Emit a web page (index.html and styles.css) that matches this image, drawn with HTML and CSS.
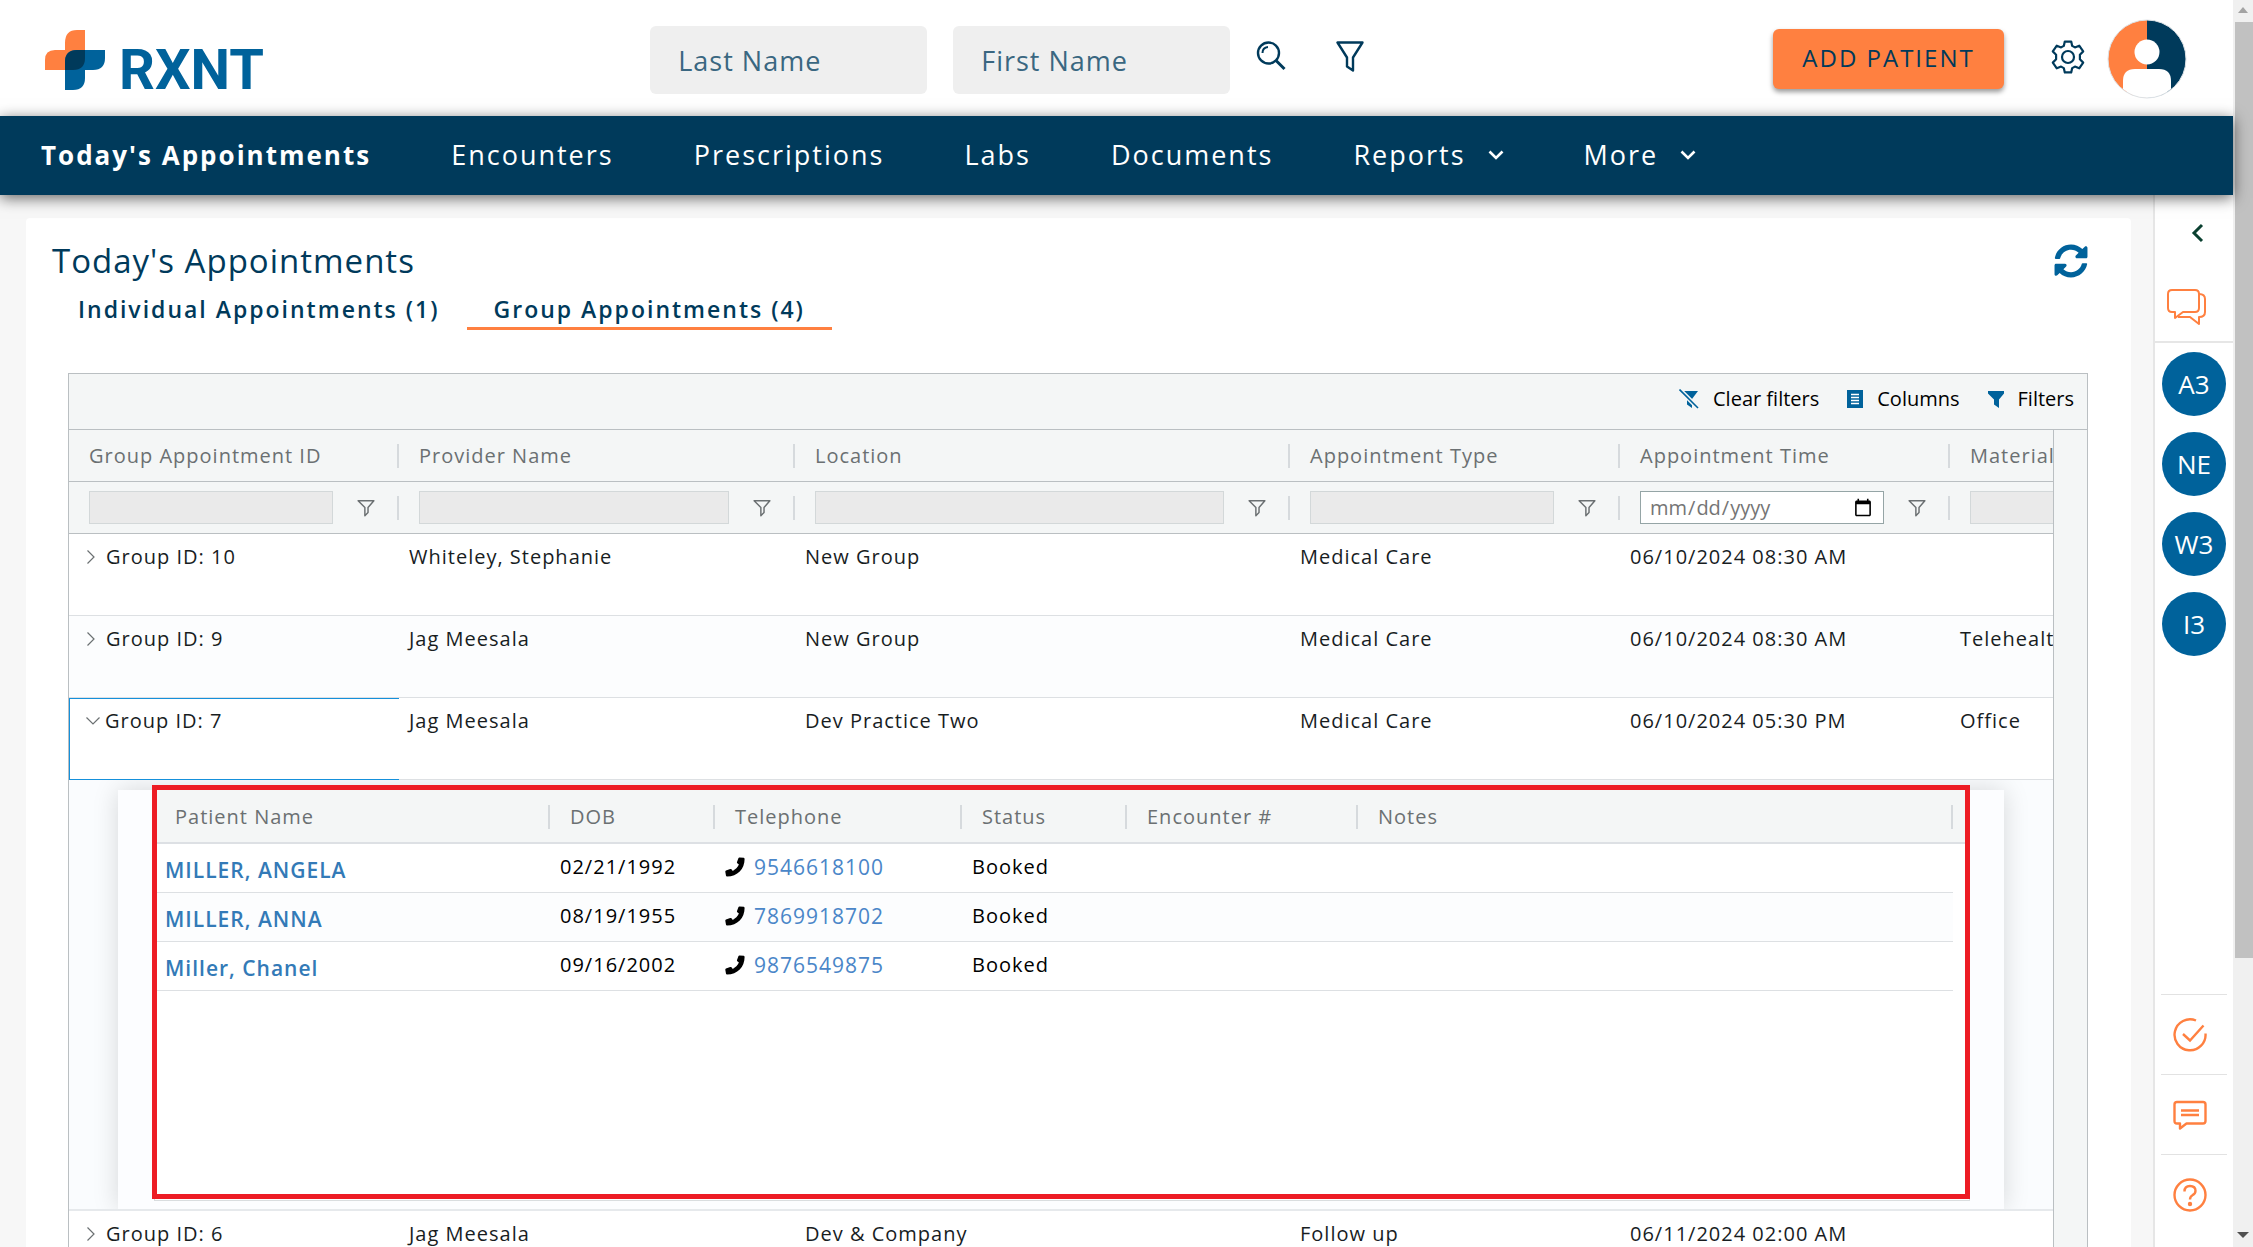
FILE: index.html
```html
<!DOCTYPE html>
<html lang="en">
<head>
<meta charset="utf-8">
<meta name="viewport" content="width=device-width, initial-scale=1">
<title>Today's Appointments</title>
<link rel="stylesheet" href="styles.css">
</head>
<body>
<svg class="sprite" aria-hidden="true">
  <symbol id="funnel" viewBox="0 0 16 16"><path d="M1 1.500h14l-5.200 6v4.500L7 14.800V7.500z" fill="none" stroke="currentColor" stroke-width="1.300" stroke-linejoin="round"/></symbol>
  <symbol id="chev-right" viewBox="0 0 10 16"><path d="M1.500 1.500 8 8l-6.500 6.500" fill="none" stroke="currentColor" stroke-width="1.200"/></symbol>
  <symbol id="chev-down" viewBox="0 0 16 10"><path d="M1.500 1.500 8 8l6.500-6.500" fill="none" stroke="currentColor" stroke-width="1.200"/></symbol>
  <symbol id="caret" viewBox="0 0 16 10"><path d="M1.500 1.500 8 8l6.500-6.500" fill="none" stroke="currentColor" stroke-width="2.600"/></symbol>
  <symbol id="phone" viewBox="0 0 20 20"><path d="M14.500 0.500 18.800 0.800Q19.600 1 19.600 2C19.600 12 12.500 19.500 2 19.500Q1.200 19.500 1 18.700L.3 14.700Q.2 13.900 1 13.500L5.200 12Q6 11.700 6.500 12.300L7.800 13.900C10.500 12.500 12.600 10.400 13.900 7.600L12.300 6.200Q11.700 5.700 12 5L13.500 1.100Q13.800.4 14.500.5z" fill="currentColor"/></symbol>
</svg>
<div class="shell">
  <div class="app">
    <header class="top">
      <a class="logo" href="#" aria-label="RXNT home">
        <svg class="logo-mark" viewBox="0 0 60 60" aria-hidden="true">
          <path d="M40 0v40H0V30Q0 20 10 20h10V13Q20 0 32 0z" fill="#ff8040"/>
          <path d="M32 20h28v8q0 12-12 12h-8v8q0 12-12 12h-8V32q0-12 12-12z" fill="#00629b"/>
          <path d="M32 20h8v8q0 12-12 12h-8v-8q0-12 12-12z" fill="#003a5b"/>
        </svg>
        <span>RXNT</span>
      </a>
      <form class="search">
        <input type="text" placeholder="Last Name" aria-label="Last Name">
        <input type="text" placeholder="First Name" aria-label="First Name">
        <button type="button" class="icon-btn" aria-label="Search">
          <svg width="30" height="30" viewBox="0 0 30 30" fill="none" stroke="currentColor"><circle cx="12.500" cy="12" r="10.500" stroke-width="2.400"/><path d="M20 19.500 28.500 28" stroke-width="3"/><path d="M6.500 12q0-5.500 5.500-6" stroke-width="2"/></svg>
        </button>
        <button type="button" class="icon-btn" aria-label="Filter">
          <svg width="28" height="32" viewBox="0 0 28 32" fill="none" stroke="currentColor" stroke-width="2.400"><path d="M1.500 2.500h25L17 17.500V30.500l-6-4v-9z" stroke-linejoin="round"/></svg>
        </button>
      </form>
      <div class="account">
        <button type="button" class="add">ADD PATIENT</button>
        <button type="button" class="gear" aria-label="Settings">
          <svg width="34" height="34" viewBox="0 0 34 34" fill="none" stroke="currentColor" stroke-width="2.200" stroke-linejoin="round"><path d="M13.800 1.600h6.400l1 4.300 2.700 1.500 4.300-1.700 4 5.700-3.300 3.300v4.600l3.300 3.300-4 5.700-4.300-1.700-2.700 1.500-1 4.300h-6.400l-1-4.300-2.700-1.500-4.300 1.700-4-5.700 3.300-3.300v-4.600L1.800 11.400l4-5.700 4.300 1.700 2.700-1.500z"/><circle cx="17" cy="17" r="6"/></svg>
        </button>
        <button type="button" class="avatar" aria-label="Account">
          <svg width="80" height="80" viewBox="0 0 80 80"><path d="M40 1a39 39 0 0 0 0 78z" fill="#ff8040"/><path d="M40 1a39 39 0 0 1 0 78z" fill="#003a5b"/><circle cx="40" cy="33" r="12.500" fill="#fff"/><path d="M16 70V62q0-12 12-12h24q12 0 12 12v8q-10 9-24 9t-24-9z" fill="#fff"/><circle cx="40" cy="40" r="39" fill="none" stroke="#dde2e6"/></svg>
        </button>
      </div>
    </header>
    <nav class="nav">
      <a class="active" href="#">Today's Appointments</a>
      <a href="#">Encounters</a>
      <a href="#">Prescriptions</a>
      <a href="#">Labs</a>
      <a href="#">Documents</a>
      <a href="#">Reports <svg width="16" height="10"><use href="#caret"/></svg></a>
      <a href="#">More <svg width="16" height="10"><use href="#caret"/></svg></a>
    </nav>
    <div class="body">
      <main class="card">
        <div class="card-head">
          <h1>Today's Appointments</h1>
          <button type="button" class="refresh" aria-label="Refresh">
            <svg width="34" height="34" viewBox="0 0 512 512" fill="currentColor"><path d="M370.700 133.300C339.500 104 298.900 88 255.800 88c-77.500.1-144.300 53.200-162.800 126.900-1.300 5.400-6.100 9.100-11.700 9.100H24.100c-7.500 0-13.200-6.800-11.800-14.200C33.900 94.900 134.800 8 256 8c66.400 0 126.800 26.100 171.300 68.700L463 41C478.100 25.900 504 36.600 504 57.900V192c0 13.300-10.700 24-24 24H345.900c-21.400 0-32.100-25.900-17-41zM32 296h134.100c21.400 0 32.100 25.900 17 41l-41.800 41.800c31.300 29.300 71.800 45.300 114.900 45.300 77.400-.1 144.300-53.100 162.800-126.800 1.300-5.400 6.100-9.100 11.700-9.100h57.300c7.500 0 13.200 6.800 11.800 14.200C478.100 417.100 377.200 504 256 504c-66.400 0-126.800-26.100-171.300-68.700L49 471c-15.100 15.100-41 4.400-41-16.900V320c0-13.300 10.700-24 24-24z"/></svg>
          </button>
        </div>
        <div class="tabs" role="tablist">
          <button type="button" role="tab">Individual Appointments (1)</button>
          <button type="button" role="tab" aria-selected="true">Group Appointments (4)</button>
        </div>
        <section class="grid">
          <div class="toolbar">
            <button type="button"><svg width="20" height="20" viewBox="0 0 20 20"><path d="M1 2h18l-6 8v9l-5-3.500V10z" fill="currentColor"/><path d="M0 0l19.500 19.500" stroke="#f4f6f6" stroke-width="4.500"/><path d="M.5.5l18.500 18.500" stroke="currentColor" stroke-width="1.600"/></svg>Clear filters</button>
            <button type="button"><svg class="narrow" width="16" height="20" viewBox="0 0 16 20"><path d="M0 1h16v18H0z" fill="currentColor"/><path d="M4 5.500h8M4 8.500h8M4 11.500h8M4 14.500h8" stroke="#fff" stroke-width="1.300"/></svg>Columns</button>
            <button type="button"><svg class="narrow" width="16" height="20" viewBox="0 0 16 20"><path d="M0 2h16v2.500l-5 6V19l-5-3.500v-5l-6-6z" fill="currentColor"/></svg>Filters</button>
          </div>
          <div class="grid-body">
            <div class="viewport">
              <table class="groups">
                <colgroup><col class="c-330"><col class="c-396"><col class="c-495"><col class="c-330"><col class="c-330"><col></colgroup>
                <thead>
                  <tr class="heads">
                    <th scope="col"><span>Group Appointment ID</span></th>
                    <th scope="col"><span>Provider Name</span></th>
                    <th scope="col"><span>Location</span></th>
                    <th scope="col"><span>Appointment Type</span></th>
                    <th scope="col"><span>Appointment Time</span></th>
                    <th scope="col"><span>Material</span></th>
                  </tr>
                  <tr class="filters">
                    <td><div class="filter"><input type="text" disabled aria-label="Filter group appointment ID"><button type="button" aria-label="Filter options"><svg width="18" height="18"><use href="#funnel"/></svg></button></div></td>
                    <td><div class="filter"><input type="text" disabled aria-label="Filter provider name"><button type="button" aria-label="Filter options"><svg width="18" height="18"><use href="#funnel"/></svg></button></div></td>
                    <td><div class="filter"><input type="text" disabled aria-label="Filter location"><button type="button" aria-label="Filter options"><svg width="18" height="18"><use href="#funnel"/></svg></button></div></td>
                    <td><div class="filter"><input type="text" disabled aria-label="Filter appointment type"><button type="button" aria-label="Filter options"><svg width="18" height="18"><use href="#funnel"/></svg></button></div></td>
                    <td><div class="filter"><input type="date" aria-label="Filter appointment time"><button type="button" aria-label="Filter options"><svg width="18" height="18"><use href="#funnel"/></svg></button></div></td>
                    <td><div class="filter wide"><input type="text" disabled aria-label="Filter material"></div></td>
                  </tr>
                </thead>
                <tbody>
                  <tr class="row">
                    <td><button type="button" class="toggle"><svg width="10" height="16"><use href="#chev-right"/></svg>Group ID: 10</button></td>
                    <td>Whiteley, Stephanie</td><td>New Group</td><td>Medical Care</td><td>06/10/2024 08:30 AM</td><td></td>
                  </tr>
                  <tr class="row odd">
                    <td><button type="button" class="toggle"><svg width="10" height="16"><use href="#chev-right"/></svg>Group ID: 9</button></td>
                    <td>Jag Meesala</td><td>New Group</td><td>Medical Care</td><td>06/10/2024 08:30 AM</td><td>Telehealth</td>
                  </tr>
                  <tr class="row">
                    <td class="focused"><button type="button" class="toggle open"><svg width="16" height="10"><use href="#chev-down"/></svg>Group ID: 7</button></td>
                    <td>Jag Meesala</td><td>Dev Practice Two</td><td>Medical Care</td><td>06/10/2024 05:30 PM</td><td>Office</td>
                  </tr>
                  <tr class="detail">
                    <td colspan="6">
                      <div class="panel">
                        <div class="patients">
                          <table>
                            <colgroup><col class="c-395"><col class="c-165"><col class="c-247"><col class="c-165"><col class="c-231"><col><col class="c-gutter"></colgroup>
                            <thead>
                              <tr>
                                <th scope="col"><span>Patient Name</span></th><th scope="col"><span>DOB</span></th><th scope="col"><span>Telephone</span></th><th scope="col"><span>Status</span></th><th scope="col"><span>Encounter #</span></th><th scope="col"><span>Notes</span></th><td></td>
                              </tr>
                            </thead>
                            <tbody>
                              <tr><td class="name"><a href="#">MILLER, ANGELA</a></td><td>02/21/1992</td><td><a class="tel" href="#"><svg width="20" height="20"><use href="#phone"/></svg>9546618100</a></td><td>Booked</td><td></td><td></td></tr>
                              <tr class="odd"><td class="name"><a href="#">MILLER, ANNA</a></td><td>08/19/1955</td><td><a class="tel" href="#"><svg width="20" height="20"><use href="#phone"/></svg>7869918702</a></td><td>Booked</td><td></td><td></td></tr>
                              <tr><td class="name"><a href="#">Miller, Chanel</a></td><td>09/16/2002</td><td><a class="tel" href="#"><svg width="20" height="20"><use href="#phone"/></svg>9876549875</a></td><td>Booked</td><td></td><td></td></tr>
                            </tbody>
                          </table>
                        </div>
                        <div class="highlight"></div>
                      </div>
                    </td>
                  </tr>
                  <tr class="row">
                    <td><button type="button" class="toggle"><svg width="10" height="16"><use href="#chev-right"/></svg>Group ID: 6</button></td>
                    <td>Jag Meesala</td><td>Dev &amp; Company</td><td>Follow up</td><td>06/11/2024 02:00 AM</td><td></td>
                  </tr>
                </tbody>
              </table>
            </div>
            <div class="side-strip"></div>
          </div>
        </section>
      </main>
      <aside class="rail">
        <button type="button" class="collapse" aria-label="Expand"><svg width="14" height="20" viewBox="0 0 14 20"><path d="M11 2 3 10l8 8" fill="none" stroke="#0a4030" stroke-width="3"/></svg></button>
        <button type="button" class="chat" aria-label="Messages"><svg width="40" height="38" viewBox="0 0 40 38" fill="none" stroke="currentColor" stroke-width="2" stroke-linejoin="round"><path d="M5 2h23q4 0 4 4v14q0 4-4 4H16l-8 6v-6H5q-4 0-4-4V6q0-4 4-4z"/><path d="M32 6q6 0 6 5v13q0 5-6 5v7l-9-7H11"/></svg></button>
        <ul class="people">
          <li><button type="button">A3</button></li>
          <li><button type="button">NE</button></li>
          <li><button type="button">W3</button></li>
          <li><button type="button">I3</button></li>
        </ul>
        <div class="tools">
          <button type="button" aria-label="Tasks"><svg width="36" height="36" viewBox="0 0 36 36" fill="none" stroke="currentColor" stroke-width="2.400"><path d="M24 3.500A15.500 15.500 0 1 0 33.500 16.500"/><path d="M11 17l7 6.500L31.500 8.500"/></svg></button>
          <button type="button" aria-label="Comments"><svg width="36" height="36" viewBox="0 0 36 36" fill="none" stroke="currentColor" stroke-width="2.400" stroke-linejoin="round"><path d="M5 5h26q2.500 0 2.500 2.500v16.500q0 2.500-2.500 2.500H14.500L8 31.500v-5H5q-2.500 0-2.500-2.500V7.500Q2.500 5 5 5z"/><path d="M9 13.500h18M9 18h18"/></svg></button>
          <button type="button" aria-label="Help"><svg width="36" height="36" viewBox="0 0 36 36" fill="none" stroke="currentColor" stroke-width="2.400"><circle cx="18" cy="18" r="15.500"/><path d="M12.500 14.500q0-5.500 5.500-5.500t5.500 4.800q0 3-3 4.400Q18 19.500 18 22.500"/><circle cx="18" cy="27" r="1" fill="currentColor"/></svg></button>
        </div>
      </aside>
    </div>
  </div>
  <div class="scrollbar" aria-hidden="true">
    <svg width="10" height="6" viewBox="0 0 10 6"><path d="M5 0l5 6H0z" fill="#a3a3a3"/></svg>
    <div class="thumb"></div>
    <svg width="12" height="6" viewBox="0 0 12 6"><path d="M0 0h12L6 6z" fill="#505050"/></svg>
  </div>
</div>
</body>
</html>
```
FILE: styles.css
```css
* { box-sizing: border-box; }
body {
  margin: 0;
  overflow: hidden;
  background: #f7f7f7;
  color: #181d1f;
  font-family: "Open Sans", "Noto Sans", sans-serif;
  font-size: 20px;
  line-height: 24px;
}
button, input { font: inherit; letter-spacing: inherit; color: inherit; }
button { padding: 0; border: 0; background: none; cursor: pointer; }
a { color: inherit; text-decoration: none; }
svg { display: block; flex: none; }
.sprite { position: absolute; width: 0; height: 0; }

.shell { display: grid; grid-template-columns: minmax(0, 1fr) 20px; height: 100vh; }
.app { display: flex; flex-direction: column; min-width: 0; height: 100vh; }

/* Page header */
.top {
  display: grid;
  grid-template-columns: 29% 1fr auto;
  flex: none;
  height: 116px;
  padding-right: 46px;
  background: #fff;
  color: #003a5b;
}
.logo { display: flex; align-items: flex-start; gap: 14px; padding: 30px 0 0 45px; color: #00629b; }
.logo-mark { width: 60px; height: 60px; }
.logo span { padding-top: 10px; font: 700 56px/60px Roboto, sans-serif; }
.search { display: flex; gap: 26px; padding: 26px 0 0 16px; }
.search input {
  width: 277px;
  height: 68px;
  padding: 0 28px;
  border: 0;
  border-radius: 6px;
  background: #efefef;
  font-size: 27px;
  letter-spacing: 1px;
}
.search input::placeholder { color: #3a6781; opacity: 1; }
.icon-btn { align-self: flex-start; height: 60px; }
.icon-btn + .icon-btn { margin-left: 24px; }
.account { display: flex; align-items: center; height: 118px; }
.add {
  width: 231px;
  height: 60px;
  margin-right: 47px;
  padding-bottom: 2px;
  border-radius: 6px;
  background: #ff8040;
  box-shadow: 0 3px 5px rgba(0, 0, 0, .4);
  font-size: 24px;
  font-weight: 500;
  letter-spacing: 2px;
}
.gear { margin-right: 22px; padding-bottom: 5px; }

/* Main navigation */
.nav {
  position: relative;
  z-index: 1;
  display: flex;
  flex: none;
  align-items: center;
  height: 79px;
  padding: 0 0 2px 1px;
  background: #003a5b;
  box-shadow: 0 3px 14px rgba(0, 0, 0, .6);
  color: #fff;
  font-size: 27px;
  letter-spacing: 2px;
}
.nav a { display: flex; align-items: center; gap: 22px; padding: 0 40px; }
.nav .active { font-size: 26px; font-weight: 700; }

.body { display: grid; grid-template-columns: minmax(0, 1fr) 80px; flex: 1; min-height: 0; }
.card { margin: 23px 22px 0 26px; border-radius: 4px 4px 0 0; background: #fff; overflow: hidden; }
.card-head { display: flex; justify-content: space-between; padding: 23px 43px 0 26px; }
h1 { margin: 0; color: #003a5b; font-size: 33px; font-weight: 400; line-height: 40px; letter-spacing: 1px; }
.refresh { color: #00629b; }
.tabs { display: flex; padding: 14px 0 0 25px; }
.tabs button {
  height: 35px;
  padding: 0 27px 5px;
  border-bottom: 3px solid transparent;
  color: #003a5b;
  font-size: 23px;
  font-weight: 600;
  letter-spacing: 2px;
}
.tabs [aria-selected] { border-color: #ff8040; }

/* Appointment grid */
.grid { margin: 43px 43px 0 42px; border: 1px solid #babfc2; border-bottom: 0; background: #f4f6f6; }
.toolbar {
  display: flex;
  align-items: center;
  justify-content: flex-end;
  gap: 28px;
  height: 56px;
  padding: 0 13px 6px;
  border-bottom: 1px solid #babfc2;
  color: #000;
  font-size: 20px;
}
.toolbar button { display: flex; align-items: center; gap: 14px; }
.toolbar svg { color: #00629b; }
.grid-body { display: grid; grid-template-columns: minmax(0, 1fr) 34px; }
.viewport { overflow: hidden; background: #fff; }
.side-strip { border-left: 1px solid #babfc2; }
table { width: 100%; table-layout: fixed; border-collapse: separate; border-spacing: 0; letter-spacing: 1px; }
th, td { padding: 0; text-align: left; white-space: nowrap; overflow: hidden; }
th { color: #6b7072; font-weight: 500; }
th span { display: block; padding-left: 20px; border-right: 2px solid #d6dadd; line-height: 24px; }
th:last-child span { border: 0; }
.c-330 { width: 330px; }
.c-396 { width: 396px; }
.c-495 { width: 495px; }
.c-395 { width: 395px; }
.c-165 { width: 165px; }
.c-247 { width: 247px; }
.c-231 { width: 231px; }
.c-gutter { width: 16px; }
.heads th, .filters td { height: 52px; border-bottom: 1px solid #babfc2; background: #f4f6f6; }
.filter { display: flex; align-items: center; padding-left: 20px; }
.filter input {
  flex: 1;
  min-width: 0;
  height: 33px;
  padding: 0 8px;
  border: 1px solid #d3d8d9;
  border-radius: 0;
  background: #eaeaea;
}
.filter input[type="date"] { border-color: #95a5a6; background: #fff; color: #757575; letter-spacing: 0; }
.filter button { width: 66px; height: 24px; padding-left: 24px; border-right: 2px solid #d6dadd; color: #6b7072; }
.filter.wide { width: 264px; }

.row td { height: 82px; padding: 11px 10px 0; border-bottom: 1px solid #dde0e3; vertical-align: top; }
.row td:first-child { padding-left: 17px; }
.odd td { background: #fcfdfe; }
.toggle { display: flex; align-items: center; gap: 10px; height: 24px; }
.toggle svg { color: #6b7072; }
.toggle.open { gap: 4px; }
.row .focused { padding: 10px 0 0; border: 1px solid #1590db; border-right: 0; }
.row .focused:first-child { padding-left: 15px; }

/* Expanded group */
.detail > td { height: 431px; padding: 10px 49px 0; border-bottom: 2px solid #e6e9ec; background: #fafcfe; vertical-align: top; overflow: clip; }
.panel { position: relative; padding: 0 34px 8px 36px; background: #fcfdff; box-shadow: 0 0 24px rgba(0, 0, 0, .15); }
.patients { height: 411px; border: 1px solid #d9dddf; border-top: 0; background: #fff; }
.patients th, .patients thead td { height: 54px; padding-top: 2px; border-bottom: 2px solid #dde0e4; background: #f4f6f6; }
.patients tbody td { height: 49px; padding: 0 10px 2px; border-bottom: 1px solid #dde0e3; color: #000; }
.patients tbody .name { padding-top: 6px; color: #337ab7; font-size: 21px; font-weight: 600; }
.tel { display: flex; align-items: center; gap: 9px; color: #4a86c8; font-size: 21px; }
.tel svg { color: #000; }
.highlight { position: absolute; inset: -5px 34px 10px 34px; border: 5px solid #ed1c24; }

/* Right rail */
.rail { display: flex; flex-direction: column; align-items: center; border-left: 2px solid #e6e6e6; background: #fff; color: #ff8040; }
.collapse { margin: 28px 0 44px 8px; }
.chat { width: 100%; height: 56px; padding: 0 0 14px 12px; border-bottom: 2px solid #e6e6e6; }
.people { display: grid; gap: 16px; margin: 9px 0 0; padding: 0; list-style: none; }
.people button { width: 64px; height: 64px; border-radius: 50%; background: #00629b; color: #fff; font-size: 26px; }
.tools { display: grid; width: 66px; margin-top: auto; padding-bottom: 13px; }
.tools button { display: grid; justify-items: center; align-items: center; height: 80px; padding-right: 8px; border-top: 1px solid #e2e2e2; }

/* Scroll track */
.scrollbar { display: flex; flex-direction: column; align-items: center; padding: 7px 0 9px; background: #f0f0f0; }
.thumb { flex: none; align-self: stretch; height: 76%; margin: 9px 0 auto 2px; background: #c1c1c1; }
```
